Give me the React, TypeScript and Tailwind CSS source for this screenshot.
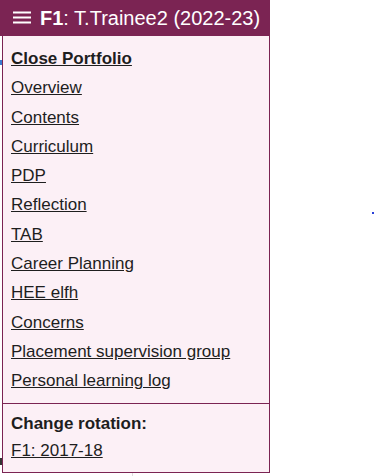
const links = [
  'Overview',
  'Contents',
  'Curriculum',
  'PDP',
  'Reflection',
  'TAB',
  'Career Planning',
  'HEE elfh',
  'Concerns',
  'Placement supervision group',
  'Personal learning log',
];

export default function App() {
  return (
    <div className="relative w-[374px] h-[476px] bg-white overflow-hidden text-[#1e1e1e] font-['Liberation_Sans',Arial,sans-serif]">
      {/* bits of the page behind the menu */}
      <div className="absolute left-[132px] top-[470px] w-px h-[6px] bg-[#ddd]" />
      <div className="absolute left-0 top-[60px] w-[2px] h-[5px] bg-[#3b7bd0]" />
      <div className="absolute left-0 top-[458px] w-[2px] h-[7px] bg-[#333]" />
      <div className="absolute left-[372px] top-[212px] w-[2px] h-[2px] bg-[#2a3fd8]" />
      <div className="relative w-[270px]">
        <div className="h-[36px] bg-[#7b2453] flex items-center pl-[13px] gap-[9px] text-white text-[20px]">
          <svg width="18" height="14" viewBox="0 0 18 14" className="shrink-0">
            <rect x="0" y="0.5" width="18" height="2" fill="#fff" />
            <rect x="0" y="5.5" width="18" height="2" fill="#fff" />
            <rect x="0" y="10.5" width="18" height="2" fill="#fff" />
          </svg>
          <span>
            <b>F1</b>: T.Trainee2 (2022-23)
          </span>
        </div>
        <div className="ml-[2px] border border-t-0 border-[#7b2453] bg-[#fcf0f6]">
          <ul className="pt-[13px] pb-[12px] px-[8px] text-[17px] leading-[20px] flex flex-col gap-[9.3px]">
            <li>
              <a href="#" className="font-bold underline">Close Portfolio</a>
            </li>
            {links.map((l) => (
              <li key={l}>
                <a href="#" className="underline">{l}</a>
              </li>
            ))}
          </ul>
          <div className="border-t border-[#7b2453] px-[8px] pt-[10px] pb-[11px] text-[17px] leading-[20px] flex flex-col gap-[7px]">
            <b>Change rotation:</b>
            <a href="#" className="underline">F1: 2017-18</a>
          </div>
        </div>
      </div>
    </div>
  );
}
